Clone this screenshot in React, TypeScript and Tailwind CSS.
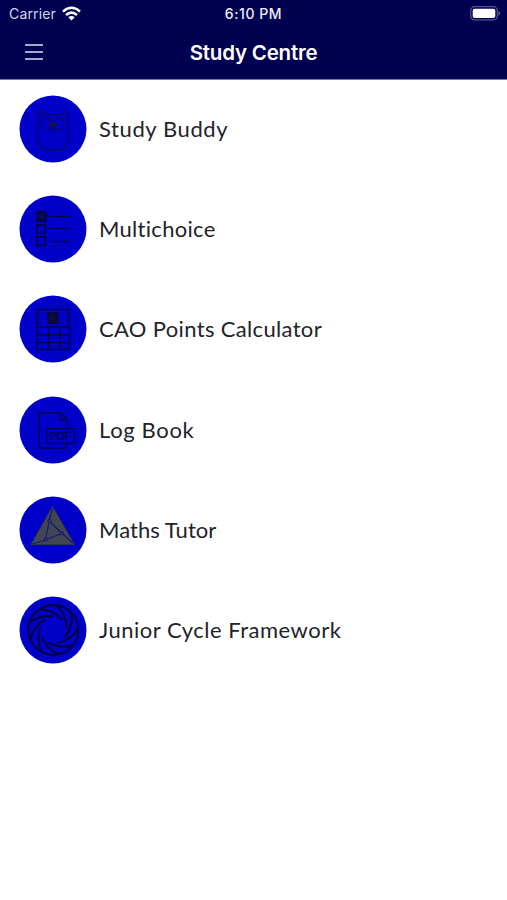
import type { ReactNode } from 'react';

const ink = '#04044a';

function Owl() {
  return (
    <g fill="none" stroke="#08086a" strokeWidth="1.400" strokeLinejoin="round">
      <path d="M24 20.500c3.500 3 7 4 10 4h10c3.500 0 7-1 10-4v29c0 6-4 10.500-10 10.500H34c-6 0-10-4.500-10-10.500Z" />
      <circle cx="33" cy="34.500" r="5.500" strokeWidth="1.100" />
      <circle cx="45" cy="34.500" r="5.500" strokeWidth="1.100" />
      <path d="M25.500 29c5-2.500 10-1 13.500 3 3.500-4 8.500-5.500 13.500-3" strokeWidth=".9" />
      <path d="M36 33q3-4 6 0l1 4h-2l-2-2-2 2h-2Z" fill="#15154a" stroke="none" />
      <path d="m36.500 40 2.500 4.500 2.500-4.500q-2.500-2-5 0Z" strokeWidth=".9" />
    </g>
  );
}

function Choices() {
  return (
    <g fill="none" stroke={ink} strokeWidth="1.800">
      <rect x="23" y="22" width="9" height="9" fill="#080850" />
      <path d="m25.500 26.500 1.500 1.500 3-3" stroke="#101070" strokeWidth=".8" />
      <rect x="23" y="35" width="8.500" height="8.500" />
      <rect x="23" y="47" width="8.500" height="8.500" />
      <path d="M36 26.500h19.500M36 38.500h19.500M36 51.500h19.500" strokeWidth="1.600" strokeLinecap="round" />
    </g>
  );
}

function Calculator() {
  return (
    <g fill="none" stroke={ink} strokeWidth="1.500">
      <path d="M23 19.500h32.500v40H23ZM23 37h32.500M23 44.800h32.500M23 52.500h32.500M34.800 37v22.500M45.800 37v22.500" />
      <path d="M25 22v13M53.500 22v13" strokeWidth=".5" />
      <rect x="33.200" y="22" width="11.500" height="12" fill="#09093e" stroke="none" />
      <path d="M38 26.500 36.500 28l1.500 1.500" stroke="#15157d" strokeWidth="1" />
    </g>
  );
}

function Pdf() {
  return (
    <g fill="none" stroke={ink} strokeWidth="1.500">
      <path d="M53 35.500V28l-6.500-6H25v35h28v-4.500M46.500 22v7H53" />
      <rect x="32.500" y="37.500" width="28" height="15" rx="1.500" />
      <text x="46.500" y="48.900" textAnchor="middle" fontSize="10" textLength="22" lengthAdjust="spacingAndGlyphs" className="font-['Liberation_Sans',sans-serif]" fill={ink} strokeWidth=".4">PDF</text>
    </g>
  );
}

function Triangle() {
  return (
    <g>
      <path d="M38.500 15.500 60.500 53.500H17Z" fill="#424650" stroke="#31354f" strokeWidth="1" strokeLinejoin="round" />
      <g fill="none" stroke="#15157c" strokeWidth="1.100">
        <path d="m38.500 17-3.200 11.500M36.500 31l10.500 10.500M49.500 43.500l9.500 9M35 31.500 31.800 47M33.500 48l13-5M30 49.500 18 53" />
        <circle cx="35.500" cy="30" r="1.500" />
        <circle cx="48" cy="42.300" r="1.500" />
        <circle cx="31.800" cy="48.500" r="1.500" />
      </g>
    </g>
  );
}

const blades = [0, 40, 80, 120, 160, 200, 240, 280, 320];

function Aperture() {
  return (
    <g fill="none" stroke="#020238" strokeWidth="2" transform="translate(39.300 39)">
      <circle r="25" strokeWidth="1.800" />
      {blades.map((angle) => (
        <path key={angle} d="M-23.500 -7.500Q-13 -15.500 0 -13.500" transform={`rotate(${angle})`} />
      ))}
    </g>
  );
}

const items: { label: string; tracking: string; icon: ReactNode }[] = [
  { label: 'Study Buddy', tracking: 'tracking-[0.6px]', icon: <Owl /> },
  { label: 'Multichoice', tracking: 'tracking-[0.3px]', icon: <Choices /> },
  { label: 'CAO Points Calculator', tracking: 'tracking-[0.34px]', icon: <Calculator /> },
  { label: 'Log Book', tracking: 'tracking-[0.65px]', icon: <Pdf /> },
  { label: 'Maths Tutor', tracking: 'tracking-[0.05px]', icon: <Triangle /> },
  { label: 'Junior Cycle Framework', tracking: 'tracking-[0.5px]', icon: <Aperture /> },
];

export default function App() {
  return (
    <div className="h-[900px] w-full overflow-hidden bg-white font-['Lato',sans-serif]">
      <header className="h-[80px] border-b border-[#7777ad] bg-[#000050] font-['Inter',sans-serif] text-white">
        <div className="grid h-[27px] grid-cols-3 items-center pl-[9px] pr-[7px]">
          <div className="flex items-center gap-[6px] text-[14px] text-[#d5d5ea]">
            <span className="tracking-[0.15px]">Carrier</span>
            <svg width="19" height="15" viewBox="0 0 19 15" fill="none" stroke="white" strokeWidth="2.500">
              <path d="M1 5.600Q9.500-2 18 5.600M4 9Q9.500 4.200 15 9" />
              <path d="M6.300 11.200Q9.500 8.600 12.700 11.200L9.500 14.500Z" fill="white" stroke="none" />
            </svg>
          </div>
          <span className="-ml-[2px] text-center text-[14px] font-medium tracking-[0.55px] text-[#eeeefa]">6:10 PM</span>
          <svg className="justify-self-end" width="30" height="15" viewBox="0 0 30 15">
            <rect x=".700" y=".700" width="26.600" height="13.200" rx="4" fill="none" stroke="#55558d" strokeWidth="1.200" />
            <rect x="2.700" y="2.700" width="22.600" height="9.200" rx="2" fill="white" />
            <path d="M28.500 5v5q3-2.500 0-5" fill="#69699b" />
          </svg>
        </div>
        <div className="grid h-[52px] grid-cols-[67px_1fr_67px] items-center">
          <button className="mb-[3px] flex w-[18px] flex-col gap-[5px] justify-self-center" aria-label="Menu">
            <span className="h-[2px] w-full bg-[#a8a8ce]" />
            <span className="h-[2px] w-full bg-[#a8a8ce]" />
            <span className="h-[2px] w-full bg-[#a8a8ce]" />
          </button>
          <h1 className="text-center text-[20.500px] font-semibold tracking-[-0.2px]">Study Centre</h1>
        </div>
      </header>
      <ul className="pt-[15px]">
        {items.map(({ label, tracking, icon }) => (
          <li key={label} className="flex h-[100.200px] items-start gap-[12px] pl-[19px]">
            <svg width="68" height="68" viewBox="5 5 68 68" className="shrink-0">
              <circle cx="39" cy="39" r="33.500" fill="#0000c8" />
              {icon}
            </svg>
            <span className={`whitespace-nowrap text-[22px] font-normal leading-[67px] text-[#22232a] ${tracking}`}>{label}</span>
          </li>
        ))}
      </ul>
    </div>
  );
}
